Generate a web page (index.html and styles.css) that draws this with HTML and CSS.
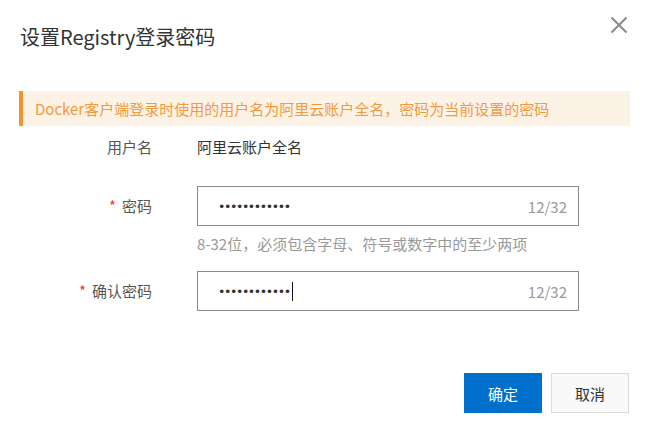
FILE: index.html
```html
<!DOCTYPE html>
<html lang="zh-CN">
<head>
<meta charset="utf-8">
<link rel="stylesheet" href="styles.css">
</head>
<body>
<div class="dialog">
  <div class="header">
    <div class="title">设置Registry登录密码</div>
    <button class="close" aria-label="关闭">
      <svg width="18" height="18" viewBox="0 0 18 18"><path d="M1.5 1.5 L16.5 16.5 M16.5 1.5 L1.5 16.5" stroke="#8a8a8a" stroke-width="2" fill="none"/></svg>
    </button>
  </div>
  <div class="alert">Docker客户端登录时使用的用户名为阿里云账户全名，密码为当前设置的密码</div>
  <div class="form">
    <div class="row row-user">
      <div class="label">用户名</div>
      <div class="value">阿里云账户全名</div>
    </div>
    <div class="row row-pass">
      <div class="label"><span class="req">*</span>密码</div>
      <div class="field">
        <div class="input"><span class="dots">••••••••••••</span><span class="count">12/32</span></div>
        <div class="hint">8-32位，必须包含字母、符号或数字中的至少两项</div>
      </div>
    </div>
    <div class="row row-confirm">
      <div class="label"><span class="req">*</span>确认密码</div>
      <div class="field">
        <div class="input"><span class="dots">••••••••••••</span><span class="caret"></span><span class="count">12/32</span></div>
      </div>
    </div>
  </div>
  <div class="footer">
    <button class="btn btn-primary">确定</button>
    <button class="btn btn-default">取消</button>
  </div>
</div>
</body>
</html>
```

FILE: styles.css
```css
* { box-sizing: border-box; }
html, body { margin: 0; padding: 0; background: #fff; }
body {
  font-family: "Noto Sans CJK SC", "Noto Sans", sans-serif;
  font-size: 15px;
  color: #333;
}
.dialog {
  width: 650px;
  height: 436px;
  padding: 0 20px 0 19px;
  display: flex;
  flex-direction: column;
}
.header {
  display: flex;
  justify-content: space-between;
  align-items: flex-start;
  height: 91px;
}
.title {
  margin-top: 23px;
  margin-left: 1px;
  font-size: 20px;
  line-height: 28px;
  color: #333;
}
.close {
  margin-top: 16px;
  margin-right: 2px;
  padding: 0;
  border: 0;
  background: none;
  width: 18px;
  height: 18px;
  display: flex;
}
.alert {
  height: 35px;
  line-height: 35px;
  background: #fdf2e6;
  border-left: 4px solid #f1932f;
  padding-left: 12px;
  color: #f39a3f;
  font-size: 15px;
}
.form { display: flex; flex-direction: column; }
.row { display: flex; align-items: flex-start; }
.label {
  width: 133px;
  margin-right: 45px;
  text-align: right;
  color: #555;
  line-height: 40px;
}
.row-user { height: 42px; }
.row-user .label, .row-user .value { line-height: 42px; }
.value { color: #333; }
.row-pass { margin-top: 18px; }
.row-confirm { margin-top: 17px; }
.req { color: #e5443c; margin-right: 6px; }
.field { display: flex; flex-direction: column; }
.input {
  width: 382px;
  height: 40px;
  border: 1px solid #8c8c8c;
  display: flex;
  align-items: center;
  padding: 0 11px 0 20px;
}
.dots {
  font-family: "DejaVu Sans", sans-serif;
  font-size: 12.5px;
  letter-spacing: -1.4px;
  color: #333;
}
.caret {
  width: 1px;
  height: 19px;
  background: #111;
  margin-left: 2px;
}
.count {
  margin-left: auto;
  color: #999;
  font-size: 15px;
}
.hint {
  margin-top: 8px;
  line-height: 20px;
  color: #999;
}
.footer {
  margin-top: auto;
  margin-bottom: 23px;
  display: flex;
  justify-content: flex-end;
  gap: 9px;
  padding-right: 1px;
}
.btn {
  width: 78px;
  height: 40px;
  font-family: inherit;
  font-size: 15px;
  border-radius: 0;
  cursor: pointer;
}
.btn-primary { background: #0070cc; color: #fff; border: 1px solid #0070cc; }
.btn-default { background: #f9f9f9; color: #333; border: 1px solid #dcdcdc; }
```
